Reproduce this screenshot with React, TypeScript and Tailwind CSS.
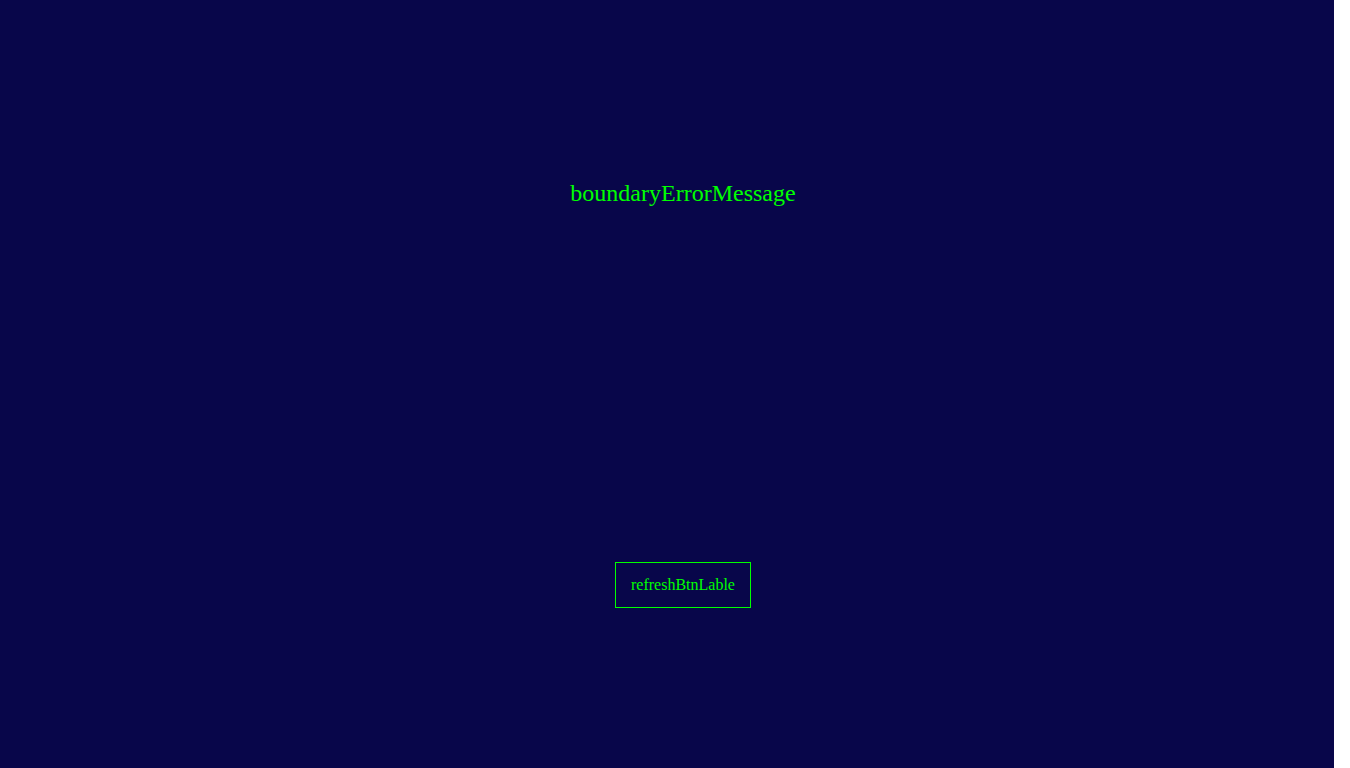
export default function App() {
  return (
    <div className="w-[1334px] h-[768px] bg-[#08064a] overflow-hidden" style={{ fontFamily: '"Liberation Serif", serif' }}>
      <div className="flex flex-col items-center pl-[32px] pt-[179px]">
        <h1 className="text-[24px] leading-[28px] text-[#00ff00] font-normal">boundaryErrorMessage</h1>
        <button className="mt-[355px] w-[136px] h-[46px] border border-[#00ff00] text-[#00ff00] text-[16px] leading-[18px] flex items-center justify-center bg-transparent">
          refreshBtnLable
        </button>
      </div>
    </div>
  );
}
